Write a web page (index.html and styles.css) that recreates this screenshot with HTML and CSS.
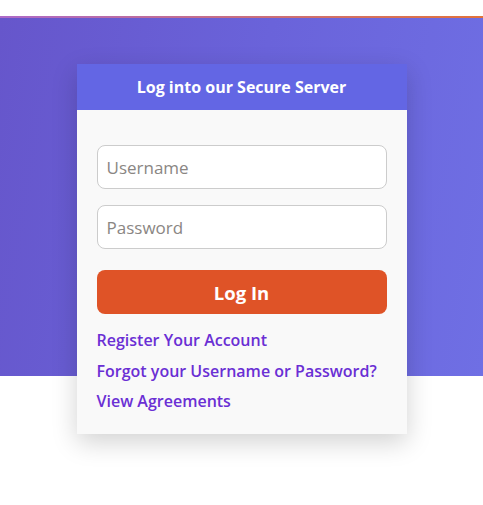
FILE: index.html
```html
<!DOCTYPE html>
<html lang="en">
<head>
<meta charset="utf-8">
<title>Log in</title>
<link rel="stylesheet" href="styles.css">
</head>
<body>
<div class="topspace"></div>
<div class="accent"></div>
<section class="hero">
  <div class="card">
    <div class="card-head">Log into our Secure Server</div>
    <form class="card-body">
      <input class="field" type="text" placeholder="Username">
      <input class="field field-pass" type="password" placeholder="Password">
      <button class="btn" type="button">Log In</button>
      <div class="links">
        <a href="#">Register Your Account</a>
        <a href="#">Forgot your Username or Password?</a>
        <a href="#">View Agreements</a>
      </div>
    </form>
  </div>
</section>
</body>
</html>
```
FILE: styles.css
```css
* { box-sizing: border-box; }
html, body { margin: 0; padding: 0; background: #fff; }
body { font-family: "Open Sans", "Liberation Sans", sans-serif; }
.topspace { height: 16px; }
.accent { height: 2px; background: linear-gradient(90deg, #ad6ac8, #e2723a); }
.hero {
  padding: 46px 0 70px 0;
  background-image: linear-gradient(100deg, #6656cb 0%, #6a63da 50%, #6f6fe4 100%);
  background-size: 100% 358px;
  background-repeat: no-repeat;
  background-color: #fff;
}
.card {
  width: 330px;
  height: 370px;
  margin: 0 auto;
  background: #f9f9f9;
  box-shadow: 0 8px 24px rgba(0,0,0,0.18);
  display: flex;
  flex-direction: column;
}
.card-head {
  height: 46px;
  flex: none;
  background: #6366e4;
  color: #fff;
  font-weight: 700;
  font-size: 16px;
  display: flex;
  align-items: center;
  justify-content: center;
}
.card-body {
  margin: 0;
  padding: 35px 20px 0 20px;
  display: flex;
  flex-direction: column;
}
.field {
  height: 44px;
  width: 290px;
  border: 1px solid #cccccc;
  border-radius: 8px;
  background: #fff;
  padding: 0 9px;
  font-family: "Open Sans", "Liberation Sans", sans-serif;
  font-size: 17px;
  color: #333;
  outline: none;
}
.field::placeholder { color: #8a8683; }
.field-pass { margin-top: 16px; }
.btn {
  margin-top: 21px;
  height: 44px;
  border: none;
  border-radius: 8px;
  background: #df5327;
  color: #fff;
  font-family: "Open Sans", "Liberation Sans", sans-serif;
  font-weight: 700;
  font-size: 18.5px;
}
.links {
  padding-top: 11px;
  display: flex;
  flex-direction: column;
  align-items: flex-start;
}
.links a {
  color: #6a2fd4;
  text-decoration: none;
  font-size: 16px;
  font-weight: 600;
  line-height: 30.5px;
}
```
